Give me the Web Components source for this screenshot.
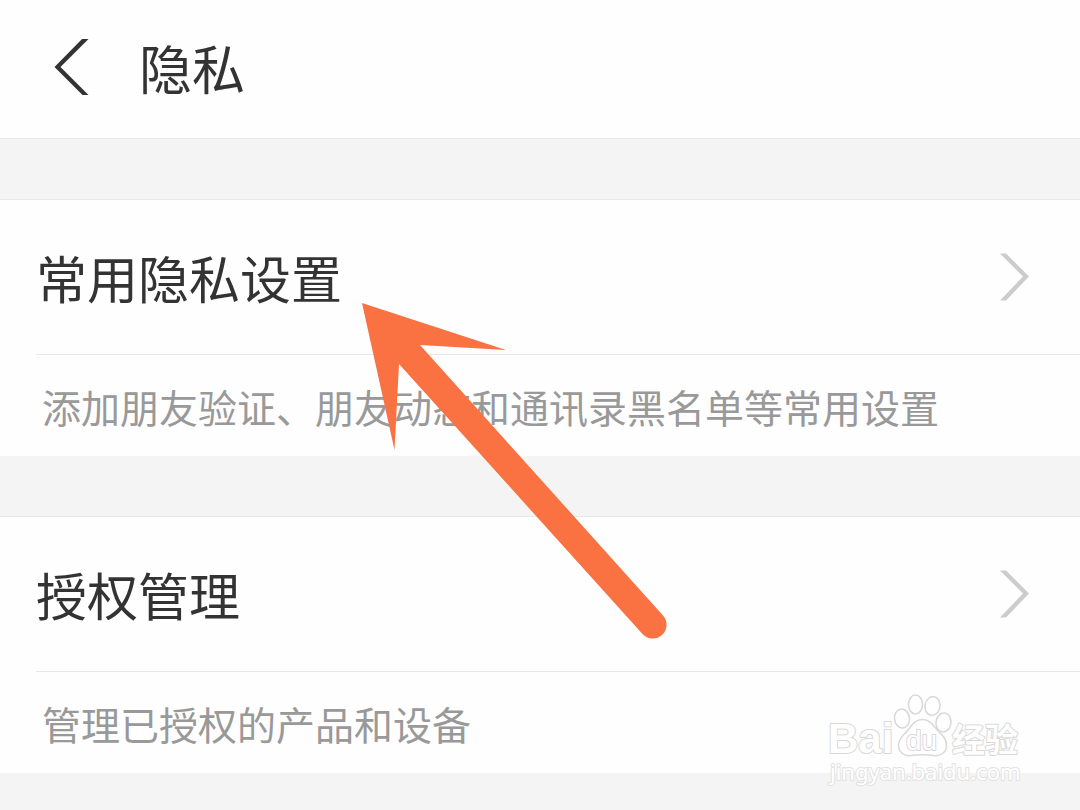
<!DOCTYPE html>
<html lang="zh-CN">
<head>
<meta charset="utf-8">
<meta name="viewport" content="width=device-width, initial-scale=1">
<title>隐私</title>
<style>
  body {
    margin: 0;
    background: #f4f4f4;
    color: #333;
    font-family: "Noto Sans CJK SC", sans-serif;
  }
</style>
</head>
<body>
<privacy-page>
  <nav-header slot="header">隐私</nav-header>
  <setting-item>常用隐私设置<span slot="note">添加朋友验证、朋友动态和通讯录黑名单等常用设置</span></setting-item>
  <setting-item>授权管理<span slot="note">管理已授权的产品和设备</span></setting-item>
  <pointer-arrow slot="overlay"></pointer-arrow>
  <site-watermark slot="overlay"></site-watermark>
</privacy-page>

<template id="page-tpl">
  <style>
    :host { display: block; position: relative; min-height: 100vh; overflow: hidden; }
    main { display: flex; flex-direction: column; gap: 60px; padding: 60px 0 36px; }
  </style>
  <slot name="header"></slot>
  <main><slot></slot></main>
  <slot name="overlay"></slot>
</template>

<template id="header-tpl">
  <style>
    :host { display: block; }
    header {
      display: flex; align-items: center; gap: 49px;
      box-sizing: border-box; min-height: 139px; padding: 0 52px 4px;
      background: #fefefe; border-bottom: 1px solid #e8e8e8;
    }
    button { display: block; padding: 0; border: 0; background: none; color: inherit; cursor: pointer; }
    svg { display: block; }
    h1 { margin: 0; font-size: 53px; font-weight: 400; line-height: 72px; }
  </style>
  <header>
    <button type="button" aria-label="返回">
      <svg width="38" height="60" viewBox="0 0 38 60" aria-hidden="true">
        <path d="M30 2H36.500L8.500 30L36.500 58H30.500L2.500 30Z" fill="currentColor"/>
      </svg>
    </button>
    <h1><slot></slot></h1>
  </header>
</template>

<template id="item-tpl">
  <style>
    :host { display: block; background: #fefefe; border-top: 1px solid #e8e8e8; }
    a {
      display: flex; align-items: center; justify-content: space-between;
      box-sizing: border-box; min-height: 155px; margin-left: 36px; padding-right: 48px;
      border-bottom: 1px solid #e8e8e8; color: inherit; text-decoration: none;
      font-size: 51px; line-height: 72px;
    }
    svg { display: block; }
    p {
      display: flex; align-items: center; box-sizing: border-box;
      min-height: 101px; margin: 0; padding: 0 42px;
      color: #999; font-size: 39px; line-height: 56px;
    }
  </style>
  <a href="#"><span><slot></slot></span>
    <svg width="32" height="48" viewBox="0 0 32 48" aria-hidden="true">
      <path d="M0 0.500H6L29 23.500L6 47.500H0L23 23.500Z" fill="#ccc"/>
    </svg>
  </a>
  <p><slot name="note"></slot></p>
</template>

<template id="arrow-tpl">
  <style>
    :host { display: block; position: absolute; left: 360px; top: 300px; pointer-events: none; }
    svg { display: block; }
  </style>
  <svg width="310" height="342" viewBox="360 300 310 342" aria-hidden="true">
    <path d="M362 303L506 350L420 345L663 615.500A13.800 13.800 0 0 1 642.500 634L399 364L394.500 450Z" fill="#fa7142"/>
  </svg>
</template>

<template id="mark-tpl">
  <style>
    :host { display: block; position: absolute; right: 50px; bottom: 20px; pointer-events: none; }
    svg { display: block; }
    text { paint-order: stroke; }
  </style>
  <svg width="210" height="100" viewBox="820 690 210 100" role="img" aria-label="Baidu 经验" fill="#fff" stroke="#d8d8d8" stroke-width="2" stroke-linejoin="round">
    <text x="828" y="753" font-family="Liberation Sans, sans-serif" font-weight="700" font-size="42">Bai</text>
    <g stroke-width="1.500">
      <ellipse cx="902" cy="718.500" rx="7.500" ry="9.500" transform="rotate(-8 902 718.500)"/>
      <ellipse cx="915.500" cy="704.500" rx="7" ry="9.500"/>
      <ellipse cx="932.500" cy="706" rx="7.500" ry="9.500" transform="rotate(10 932.500 706)"/>
      <ellipse cx="943.500" cy="722.500" rx="7.500" ry="9.500" transform="rotate(8 943.500 722.500)"/>
      <path d="M922.500 719.500C931 719.500 934 727 938 731C943 736 947 739 946.500 746C946 753 940 756.500 934 755.500C926 754.500 919 754.500 911 755.500C904 756.500 898.500 752 898.500 745C898.500 738 904 735 908 730C912 725 915 719.500 922.500 719.500Z"/>
    </g>
    <text x="906" y="750" font-family="Liberation Sans, sans-serif" font-size="28">du</text>
    <text x="952" y="752" font-family="Noto Sans CJK SC, sans-serif" font-weight="700" font-size="33">经验</text>
    <text x="830" y="780" font-family="Noto Sans, sans-serif" font-weight="400" font-size="22" stroke="#e2e2e2">jingyan.baidu.com</text>
  </svg>
</template>

<script>
  const define = (name, templateId) => customElements.define(name, class extends HTMLElement {
    constructor() {
      super();
      this.attachShadow({ mode: "open" })
        .append(document.getElementById(templateId).content.cloneNode(true));
    }
  });
  define("privacy-page", "page-tpl");
  define("nav-header", "header-tpl");
  define("setting-item", "item-tpl");
  define("pointer-arrow", "arrow-tpl");
  define("site-watermark", "mark-tpl");
</script>
</body>
</html>
